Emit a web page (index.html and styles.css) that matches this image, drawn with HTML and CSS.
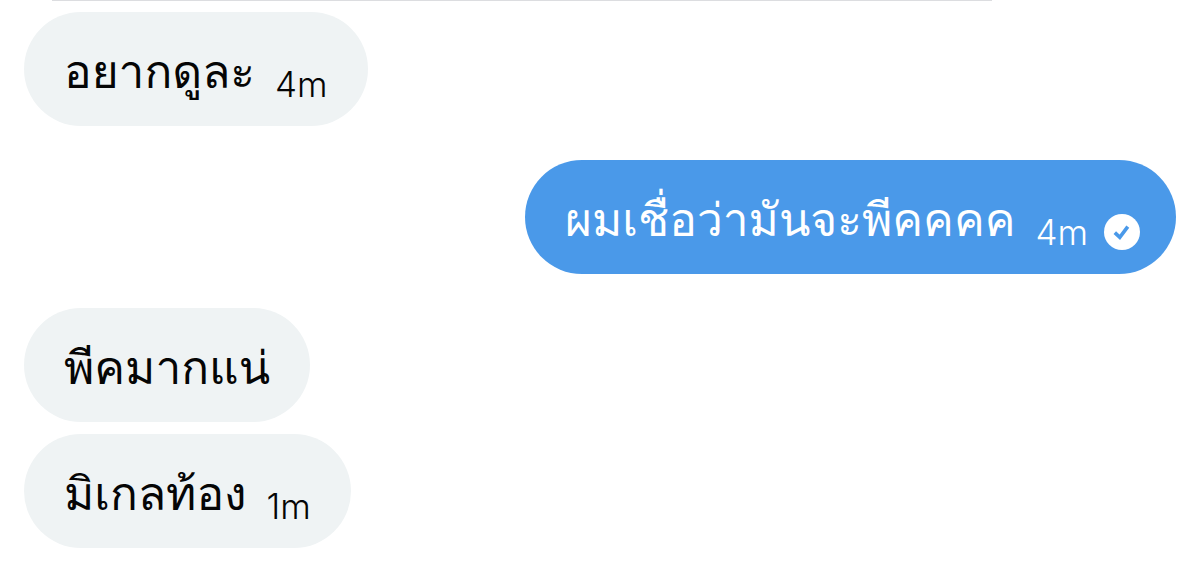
FILE: index.html
```
<!DOCTYPE html>
<html lang="th">
<head>
<meta charset="utf-8">
<meta name="viewport" content="width=device-width, initial-scale=1">
<title>ข้อความ</title>
<link rel="stylesheet" href="styles.css">
</head>
<body>
<div class="previous"></div>
<main class="chat">
  <div class="message received"><p class="text">อยากดูละ</p><time class="time">4m</time></div>
  <div class="message sent"><p class="text">ผมเชื่อว่ามันจะพีคคคค</p><time class="time">4m</time>
    <svg class="check" viewBox="0 0 36 36" role="img" aria-label="ส่งแล้ว"><circle cx="18" cy="18" r="18" fill="#fff"/><path d="M10.8 18.6l5 4.8 8-10.8" fill="none" stroke="#4a99e9" stroke-width="3.6"/></svg>
  </div>
  <div class="message received"><p class="text">พีคมากแน่</p></div>
  <div class="message received"><p class="text">มิเกลท้อง</p><time class="time">1m</time></div>
</main>
</body>
</html>
```
FILE: styles.css
```
* { box-sizing: border-box; }
body { margin: 0; background: #fff; color: #050505; font-family: Thonburi, Loma, "Noto Sans", sans-serif; }
.previous { height: 1px; margin: 0 208px 0 52px; background: #dcdde0; }
.chat { display: flex; flex-direction: column; padding: 11px 24px 18px; }
.message { display: flex; align-items: flex-end; min-height: 114px; padding: 24px 40px 18px; border-radius: 57px; }
.received { align-self: flex-start; background: #eff3f4; }
.sent { align-self: flex-end; margin: 34px 0; padding-right: 36px; background: #4a99e9; color: #fff; }
.received + .received { margin-top: 12px; }
.text { margin: 0; font-size: 46px; line-height: 72px; white-space: nowrap; }
.time { margin-left: 20px; font: 300 35px/48px Inter, sans-serif; }
.check { width: 36px; height: 36px; margin: 0 0 6px 16px; }
```
